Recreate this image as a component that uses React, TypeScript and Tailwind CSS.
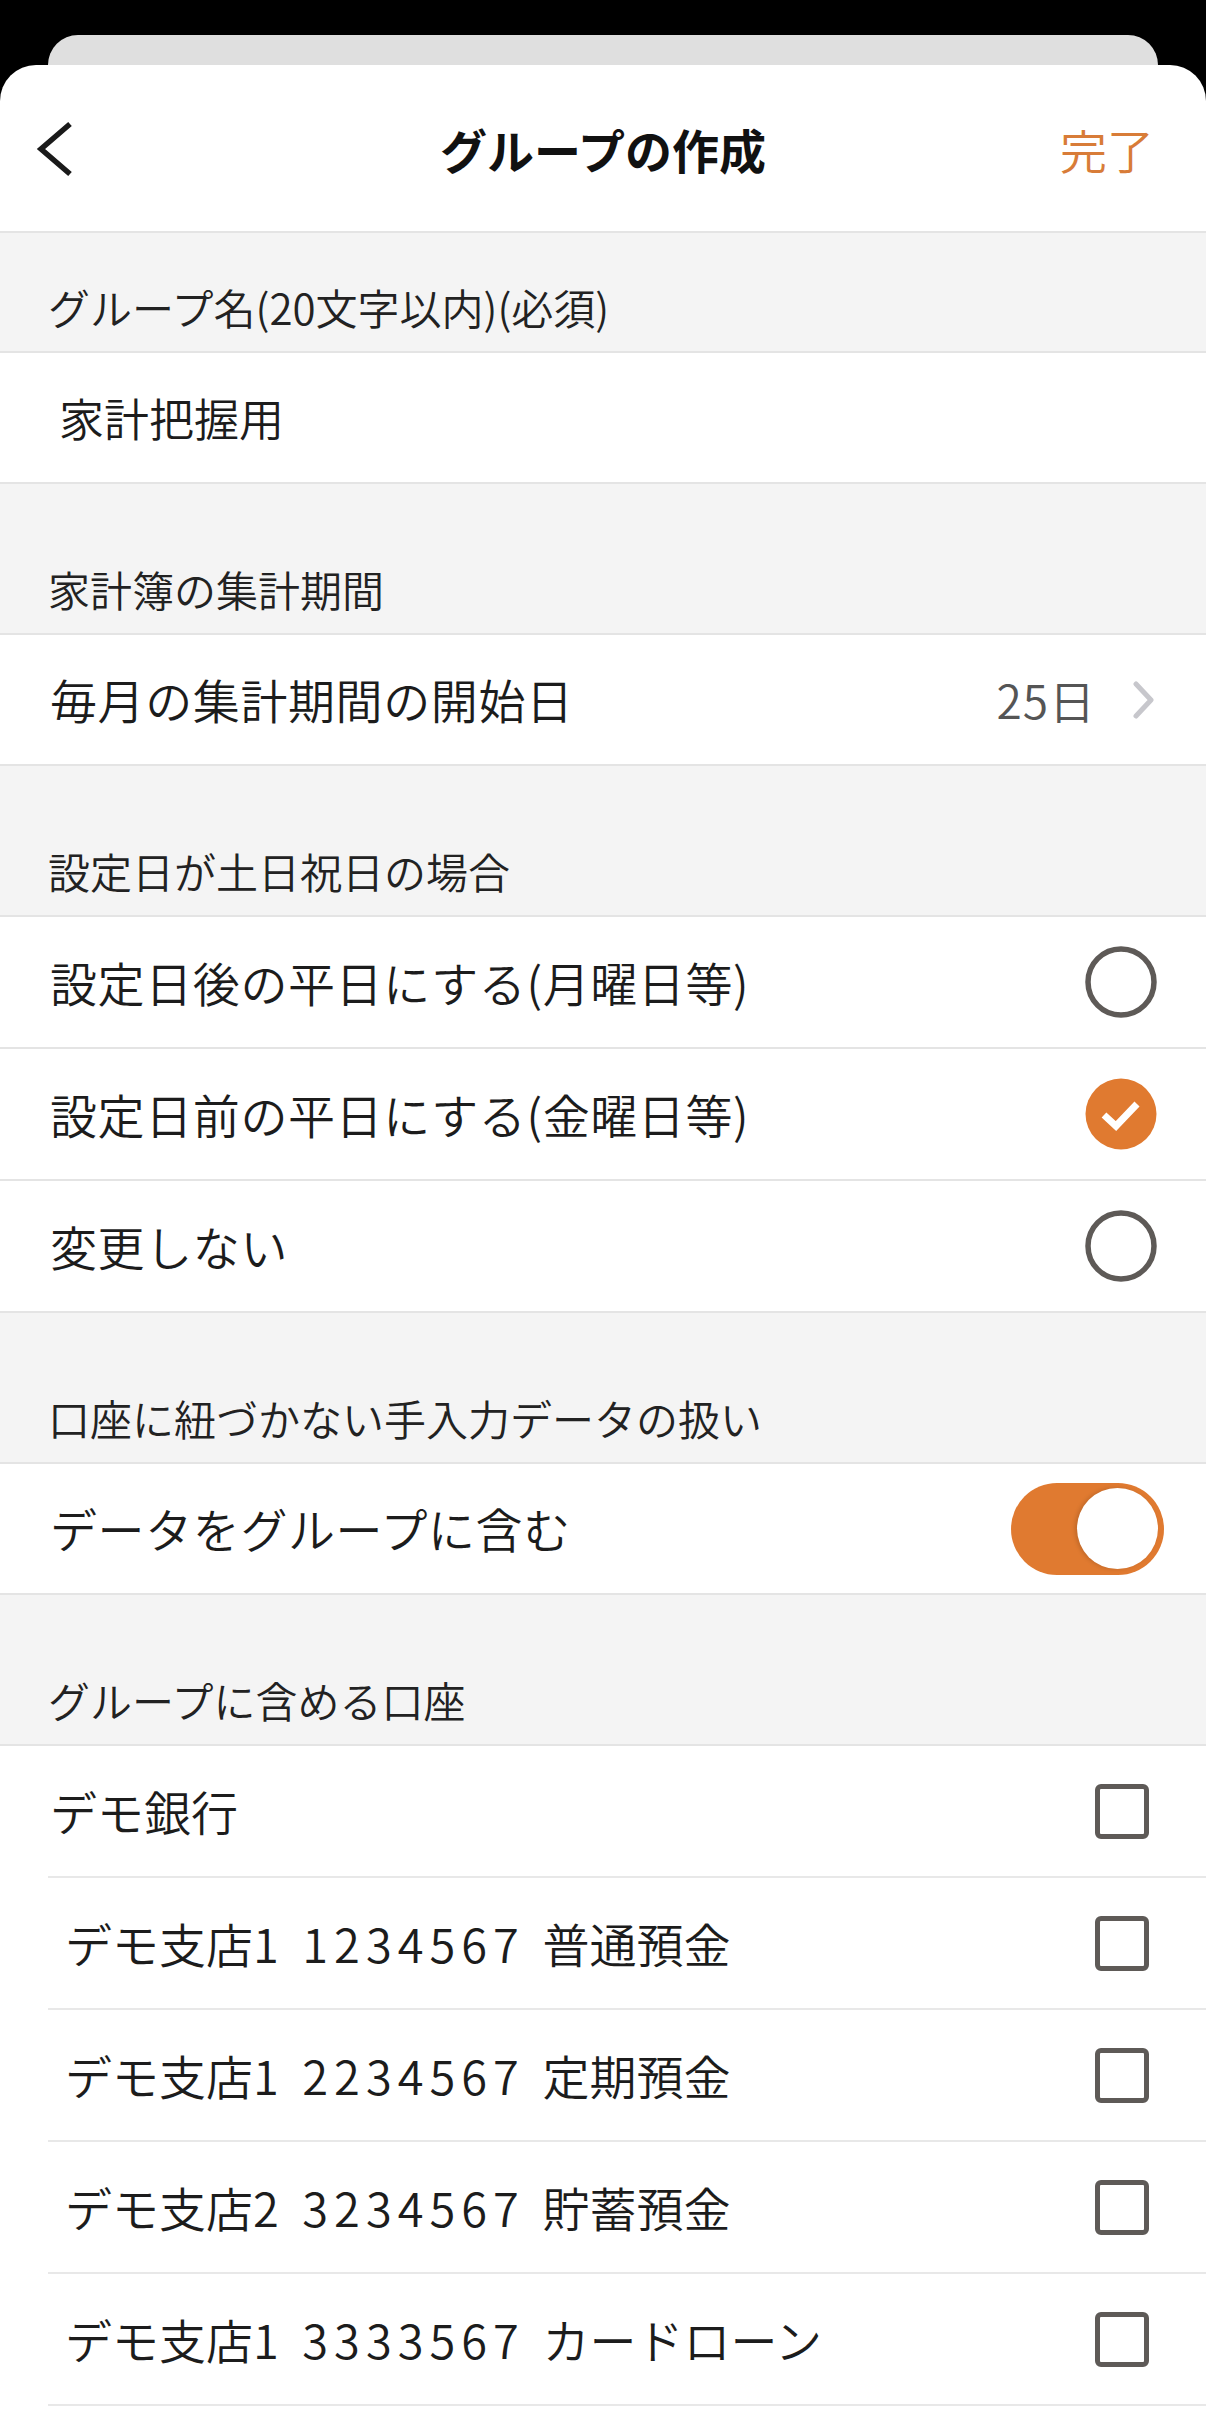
import React from "react";

const FONT = { fontFamily: '"Noto Sans CJK JP", "Noto Sans", sans-serif' };

function SectionHeader({ children, h = "h-[151px]" }: { children: React.ReactNode; h?: string }) {
  return (
    <div className={`${h} bg-[#f4f4f4] border-b-2 border-[#e4e4e4] flex items-end pl-[48px] pb-[19px]`}>
      <span className="text-[42px] leading-[50px] text-[#222] font-[350]">{children}</span>
    </div>
  );
}

function Radio({ checked }: { checked?: boolean }) {
  if (checked) {
    return (
      <svg width="72" height="72" viewBox="0 0 72 72">
        <circle cx="36" cy="36" r="35.5" fill="#e07a30" />
        <path d="M19 37 L31 48 L52 26" fill="none" stroke="#fff" strokeWidth="7" />
      </svg>
    );
  }
  return (
    <svg width="72" height="72" viewBox="0 0 72 72">
      <circle cx="36" cy="36" r="33" fill="none" stroke="#5e5a57" strokeWidth="5.5" />
    </svg>
  );
}

function Checkbox() {
  return (
    <div className="w-[54px] h-[55px] rounded-[6px] border-[5.5px] border-[#5e5a57] bg-white" />
  );
}

function withDigits(label: string) {
  return label.split(/(\d+)/).map((part, i) =>
    /^\d+$/.test(part) ? (
      <span key={i} className="tracking-[6px]">
        {part}
      </span>
    ) : (
      <span key={i}>{part}</span>
    )
  );
}

function RadioRow({ label, checked }: { label: string; checked?: boolean }) {
  return (
    <div className="h-[132px] border-b-2 border-[#e4e4e4] flex items-center justify-between pl-[50px] pr-[49px]">
      <span className="text-[47px] tracking-[0.6px] text-[#1c1c1c] font-[350]">{label}</span>
      <Radio checked={checked} />
    </div>
  );
}

function CheckRow({ label, indent }: { label: string; indent?: boolean }) {
  return (
    <div className="ml-[48px] h-[132px] border-b-2 border-[#e8e8e8] flex items-center justify-between pr-[57px]">
      <span
        className={`${indent ? "pl-[17px]" : "pl-[2px]"} text-[47px] text-[#1c1c1c] font-[350] [word-spacing:7px]`}
      >
        {withDigits(label)}
      </span>
      <Checkbox />
    </div>
  );
}

export default function App() {
  return (
    <div className="min-h-[2436px] bg-black pt-[35px] overflow-hidden" style={FONT}>
      <div className="mx-[48px] h-[60px] rounded-t-[30px] bg-[#dfdfdf]" />
      <div className="-mt-[30px] bg-white rounded-t-[36px] min-h-[2371px]">
        {/* Nav */}
        <div className="h-[168px] border-b-2 border-[#e4e4e4] grid grid-cols-[1fr_auto_1fr] items-center">
          <div className="pl-[36px] pt-[2px]">
            <svg width="40" height="56" viewBox="0 0 40 56">
              <path d="M34 3 L5 28 L34 53" fill="none" stroke="#1a1a1a" strokeWidth="5.5" />
            </svg>
          </div>
          <div className="text-[47px] font-bold text-[#111] leading-none">グループの作成</div>
          <div className="flex justify-end pr-[52px]">
            <span className="text-[47px] text-[#d87c38] leading-none font-[350]">完了</span>
          </div>
        </div>

        <SectionHeader h="h-[120px]">グループ名(20文字以内)(必須)</SectionHeader>
        <div className="h-[131px] border-b-2 border-[#e4e4e4] flex items-center pl-[59px]">
          <span className="text-[45px] text-[#1c1c1c] font-[350]">家計把握用</span>
        </div>

        <SectionHeader>家計簿の集計期間</SectionHeader>
        <div className="h-[131px] border-b-2 border-[#e4e4e4] flex items-center justify-between pl-[50px] pr-[50px]">
          <span className="text-[47px] tracking-[0.6px] text-[#1c1c1c] font-[350]">毎月の集計期間の開始日</span>
          <div className="flex items-center gap-[36px]">
            <span className="text-[46px] text-[#555] font-[350] tracking-[1px]">25日</span>
            <svg width="24" height="38" viewBox="0 0 24 38">
              <path d="M4 3 L19 19 L4 35" fill="none" stroke="#c7c7cc" strokeWidth="5" strokeLinecap="round" strokeLinejoin="round" />
            </svg>
          </div>
        </div>

        <SectionHeader>設定日が土日祝日の場合</SectionHeader>
        <RadioRow label="設定日後の平日にする(月曜日等)" />
        <RadioRow label="設定日前の平日にする(金曜日等)" checked />
        <RadioRow label="変更しない" />

        <SectionHeader>口座に紐づかない手入力データの扱い</SectionHeader>
        <div className="h-[131px] border-b-2 border-[#e4e4e4] flex items-center justify-between pl-[50px] pr-[42px]">
          <span className="text-[47px] tracking-[0.6px] text-[#1c1c1c] font-[350]">データをグループに含む</span>
          <div className="w-[153px] h-[92px] rounded-full bg-[#e07a30] flex items-center justify-end pr-[6px]">
            <div className="w-[81px] h-[81px] rounded-full bg-white shadow-[-2px_0_4px_rgba(0,0,0,0.15)]" />
          </div>
        </div>

        <SectionHeader>グループに含める口座</SectionHeader>
        <CheckRow label="デモ銀行" />
        <CheckRow label="デモ支店1 1234567 普通預金" indent />
        <CheckRow label="デモ支店1 2234567 定期預金" indent />
        <CheckRow label="デモ支店2 3234567 貯蓄預金" indent />
        <CheckRow label="デモ支店1 3333567 カードローン" indent />
      </div>
    </div>
  );
}
